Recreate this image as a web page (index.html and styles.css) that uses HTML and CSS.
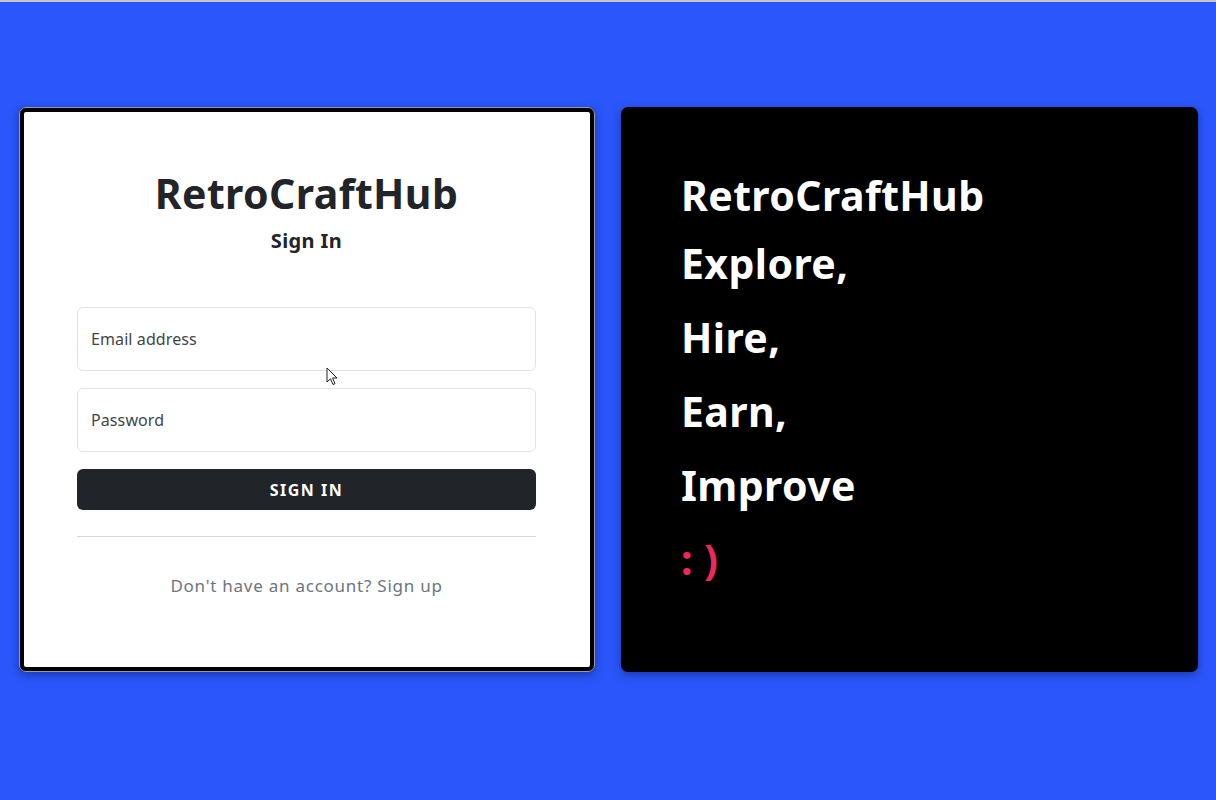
FILE: index.html
```html
<!DOCTYPE html>
<html lang="en">
<head>
<meta charset="utf-8">
<title>RetroCraftHub - Sign In</title>
<link rel="stylesheet" href="styles.css">
</head>
<body>
<div class="topline"></div>
<main class="page">
  <section class="card card-login">
    <h1 class="brand">RetroCraftHub</h1>
    <h2 class="subtitle">Sign In</h2>
    <form class="form">
      <label class="field"><span class="field-label">Email address</span></label>
      <label class="field"><span class="field-label">Password</span></label>
      <button type="button" class="btn">SIGN IN</button>
    </form>
    <hr class="divider">
    <p class="signup">Don't have an account? Sign up</p>
  </section>
  <section class="card card-hero">
    <h1 class="hero-brand">RetroCraftHub</h1>
    <p class="hero-line">Explore,</p>
    <p class="hero-line">Hire,</p>
    <p class="hero-line">Earn,</p>
    <p class="hero-line">Improve</p>
    <p class="hero-line smile">: )</p>
  </section>
</main>
<svg class="cursor" width="14" height="20" viewBox="0 0 14 20" aria-hidden="true">
  <path d="M1 1 L1 15 L4.5 11.8 L7 17.5 L9 16.6 L6.6 11 L11 11 Z" fill="#fff" stroke="#222" stroke-width="1" stroke-linejoin="round"/>
</svg>
</body>
</html>
```

FILE: styles.css
```css
* { box-sizing: border-box; }

html, body {
  margin: 0;
  padding: 0;
}

body {
  background: #2a56fb;
  font-family: "Noto Sans", "Open Sans", sans-serif;
  color: #212529;
  height: 800px;
  overflow: hidden;
  position: relative;
}

.topline {
  height: 2px;
  background: #c6c6c6;
}

.page {
  display: flex;
  gap: 26px;
  padding: 105px 18px 0 19px;
}

.card {
  height: 565px;
  border-radius: 7px;
  box-shadow: 0 3px 10px rgba(0, 0, 30, 0.35);
}

.card-login {
  flex: 0 0 576px;
  background: #fff;
  border: 5px solid #000;
  outline: 1px solid rgba(220, 220, 235, 0.7);
  outline-offset: -1px;
  padding: 57px 54px 0 53px;
  display: flex;
  flex-direction: column;
  text-align: center;
}

.brand {
  margin: 0;
  font-size: 41px;
  line-height: 48px;
  font-weight: 700;
  letter-spacing: 0.4px;
}

.subtitle {
  margin: 12px 0 0;
  font-size: 20px;
  line-height: 24px;
  font-weight: 700;
  letter-spacing: 0.4px;
}

.form {
  margin-top: 54px;
  display: flex;
  flex-direction: column;
  gap: 17px;
}

.field {
  display: flex;
  align-items: center;
  height: 64px;
  border: 1px solid #e1e3e6;
  border-radius: 6px;
  padding: 0 13px;
  text-align: left;
}

.field-label {
  font-size: 16px;
  color: #41464b;
  letter-spacing: 0.1px;
}

.btn {
  height: 41px;
  border: none;
  border-radius: 6px;
  background: #212529;
  color: #fff;
  font-family: inherit;
  font-size: 16px;
  font-weight: 700;
  letter-spacing: 1.5px;
  padding: 0;
  cursor: pointer;
}

.divider {
  margin: 26px 0 0;
  border: none;
  border-top: 1px solid #d6d8db;
}

.signup {
  margin: 36px 0 0;
  font-size: 17px;
  line-height: 26px;
  color: #6c757d;
  letter-spacing: 0.75px;
}

.card-hero {
  flex: 1;
  background: #000;
  color: #fff;
  padding: 64px 60px 0;
}

.hero-brand {
  margin: 0;
  font-size: 41px;
  line-height: 48px;
  font-weight: 700;
  letter-spacing: 0.4px;
}

.hero-line {
  margin: 20px 0 0;
  font-size: 41px;
  line-height: 48px;
  font-weight: 700;
  letter-spacing: 0.4px;
}

.hero-line + .hero-line {
  margin-top: 26px;
}

.smile {
  color: #f0285a;
}

.cursor {
  position: absolute;
  left: 326px;
  top: 367px;
}
```
